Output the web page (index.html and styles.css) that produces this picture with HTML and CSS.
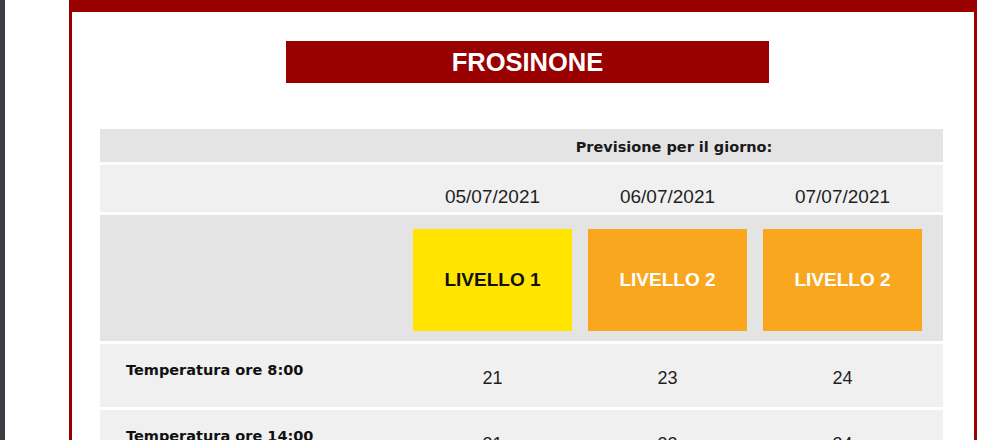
FILE: index.html
```html
<!DOCTYPE html>
<html lang="it">
<head>
<meta charset="utf-8">
<title>Frosinone</title>
<link rel="stylesheet" href="styles.css">
</head>
<body>
<div class="page">
  <div class="side-strip"></div>
  <div class="gap-left"></div>
  <main class="panel">
    <div class="title-wrap">
      <h1 class="city">FROSINONE</h1>
    </div>
    <table class="forecast">
      <colgroup>
        <col class="c-label">
        <col class="c-day">
        <col class="c-day">
        <col class="c-day">
        <col class="c-end">
      </colgroup>
      <tr class="r-head">
        <td></td>
        <td colspan="4" class="head-text">Previsione per il giorno:</td>
      </tr>
      <tr class="r-dates">
        <td></td>
        <td class="date">05/07/2021</td>
        <td class="date">06/07/2021</td>
        <td class="date">07/07/2021</td>
        <td></td>
      </tr>
      <tr class="r-levels">
        <td></td>
        <td class="lvl-cell"><div class="lvl lvl-1">LIVELLO 1</div></td>
        <td class="lvl-cell"><div class="lvl lvl-2">LIVELLO 2</div></td>
        <td class="lvl-cell"><div class="lvl lvl-2">LIVELLO 2</div></td>
        <td></td>
      </tr>
      <tr class="r-temp">
        <td class="label">Temperatura ore 8:00</td>
        <td class="num">21</td>
        <td class="num">23</td>
        <td class="num">24</td>
        <td></td>
      </tr>
      <tr class="r-temp">
        <td class="label">Temperatura ore 14:00</td>
        <td class="num">31</td>
        <td class="num">33</td>
        <td class="num">34</td>
        <td></td>
      </tr>
    </table>
  </main>
</div>
</body>
</html>
```
FILE: styles.css
```css
html, body {
  margin: 0;
  padding: 0;
  background: #ffffff;
}
body {
  font-family: "Liberation Sans", Arial, sans-serif;
  width: 990px;
  height: 440px;
  overflow: hidden;
}
.page {
  display: flex;
  align-items: stretch;
  height: 440px;
}
.side-strip {
  width: 5px;
  flex: none;
  background: #3b3e43;
}
.gap-left {
  width: 64px;
  flex: none;
}
.panel {
  width: 902px;
  flex: none;
  border-left: 3px solid #9b0000;
  border-right: 3px solid #9b0000;
  border-top: 12px solid #990000;
  box-sizing: content-box;
  height: 500px;
}
.title-wrap {
  padding: 29px 0 0 214px;
}
.city {
  margin: 0;
  width: 483px;
  height: 42px;
  background: #990000;
  color: #ffffff;
  font-family: "Liberation Sans", Arial, sans-serif;
  font-weight: bold;
  font-size: 25.5px;
  line-height: 42px;
  text-align: center;
}
.forecast {
  margin: 43px 0 0 28px;
  width: 843px;
  border-collapse: separate;
  border-spacing: 0 3px;
  table-layout: fixed;
}
.c-label { width: 305px; }
.c-day { width: 175px; }
.c-end { width: 13px; }
.forecast td {
  padding: 0;
}
.r-head td {
  background: #e4e4e4;
  height: 33px;
  box-sizing: border-box;
}
.head-text {
  font-family: "DejaVu Sans", Verdana, sans-serif;
  font-weight: bold;
  font-size: 14.5px;
  color: #1a1a1a;
  text-align: center;
  vertical-align: middle;
  padding-top: 2px !important;
}
.r-dates td {
  background: #f0f0f0;
  height: 47px;
  box-sizing: border-box;
}
.date {
  font-size: 19px;
  color: #1f1f1f;
  text-align: center;
  vertical-align: bottom;
  padding-bottom: 4px !important;
}
.r-levels td {
  background: #e4e4e4;
  height: 126px;
  box-sizing: border-box;
}
.lvl-cell {
  padding: 14px 8px 10px 8px !important;
  vertical-align: top;
}
.lvl {
  height: 102px;
  display: flex;
  align-items: center;
  justify-content: center;
  font-family: "Liberation Sans", Arial, sans-serif;
  font-weight: bold;
  font-size: 19px;
}
.lvl-1 {
  background: #ffe500;
  color: #111111;
}
.lvl-2 {
  background: #f8a71f;
  color: #ffffff;
}
.r-temp td {
  background: #f0f0f0;
  height: 63px;
  box-sizing: border-box;
}
.label {
  font-family: "DejaVu Sans", Verdana, sans-serif;
  font-weight: bold;
  font-size: 14.5px;
  color: #111111;
  vertical-align: top;
  padding: 18px 0 0 26px !important;
}
.num {
  font-size: 18px;
  color: #1f1f1f;
  text-align: center;
  vertical-align: middle;
  padding-top: 6px !important;
}
```
